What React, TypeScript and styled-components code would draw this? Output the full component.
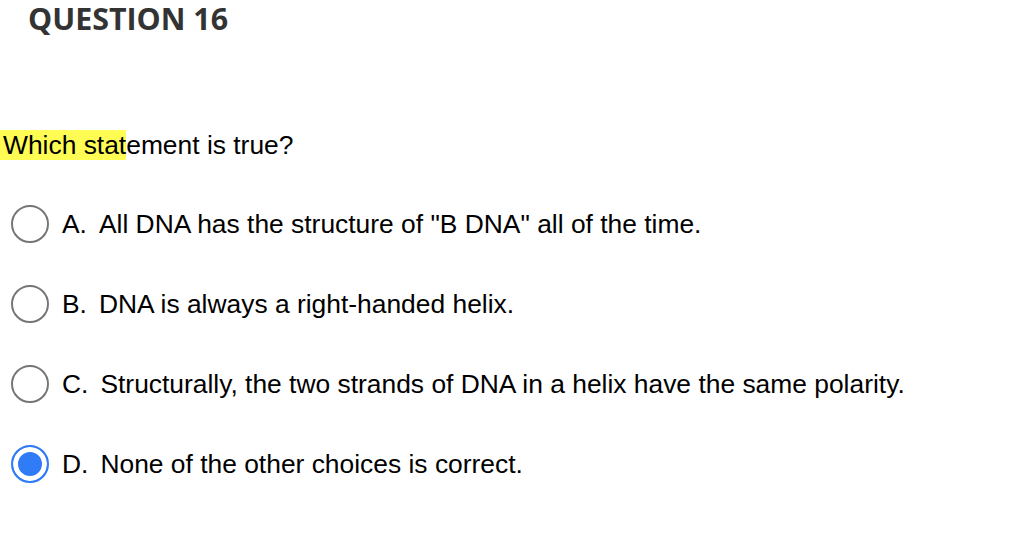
import styled, { createGlobalStyle } from "styled-components";

const GlobalStyle = createGlobalStyle`
  body {
    margin: 0;
    background: #ffffff;
  }
`;

const Page = styled.div`
  display: flex;
  flex-direction: column;
  width: 1024px;
  height: 550px;
  background: #ffffff;
`;

const Heading = styled.h1`
  margin: 0;
  padding: 3px 0 0 28px;
  font-family: "Open Sans", "Liberation Sans", sans-serif;
  font-weight: 700;
  font-size: 30.4px;
  line-height: 32px;
  color: #333333;
`;

const Question = styled.p`
  margin: 95px 0 0;
  padding-left: 3px;
  font-family: "Liberation Sans", Arial, sans-serif;
  font-size: 26.4px;
  line-height: 30px;
  color: #000000;
`;

const Highlight = styled.span`
  background: #fffd54;
  margin-left: -3px;
  padding-left: 3px;
`;

const Options = styled.ul`
  list-style: none;
  margin: 44px 0 0;
  padding: 0 0 0 11px;
  display: flex;
  flex-direction: column;
  gap: 40px;
`;

const Option = styled.li`
  display: flex;
  align-items: center;
  height: 40px;
  gap: 13px;
  font-family: "Liberation Sans", Arial, sans-serif;
  font-size: 26.4px;
  color: #000000;
`;

const Radio = styled.span<{ $checked?: boolean }>`
  box-sizing: border-box;
  flex: none;
  width: 38px;
  height: 38px;
  border-radius: 50%;
  border: 2px solid ${(p) => (p.$checked ? "#2f7cf6" : "#767676")};
  background: ${(p) => (p.$checked ? "#2f7cf6" : "#ffffff")};
  box-shadow: ${(p) => (p.$checked ? "inset 0 0 0 5px #ffffff" : "none")};
`;

const Letter = styled.span`
  margin-right: 12px;
`;

const choices = [
  { letter: "A.", text: 'All DNA has the structure of "B DNA" all of the time.' },
  { letter: "B.", text: "DNA is always a right-handed helix." },
  {
    letter: "C.",
    text: "Structurally, the two strands of DNA in a helix have the same polarity.",
  },
  { letter: "D.", text: "None of the other choices is correct.", checked: true },
];

function App() {
  return (
    <Page>
      <GlobalStyle />
      <Heading>QUESTION 16</Heading>
      <Question>
        <Highlight>Which stat</Highlight>ement is true?
      </Question>
      <Options>
        {choices.map((c) => (
          <Option key={c.letter}>
            <Radio $checked={c.checked} />
            <span>
              <Letter>{c.letter}</Letter>
              {c.text}
            </span>
          </Option>
        ))}
      </Options>
    </Page>
  );
}

export default App;
